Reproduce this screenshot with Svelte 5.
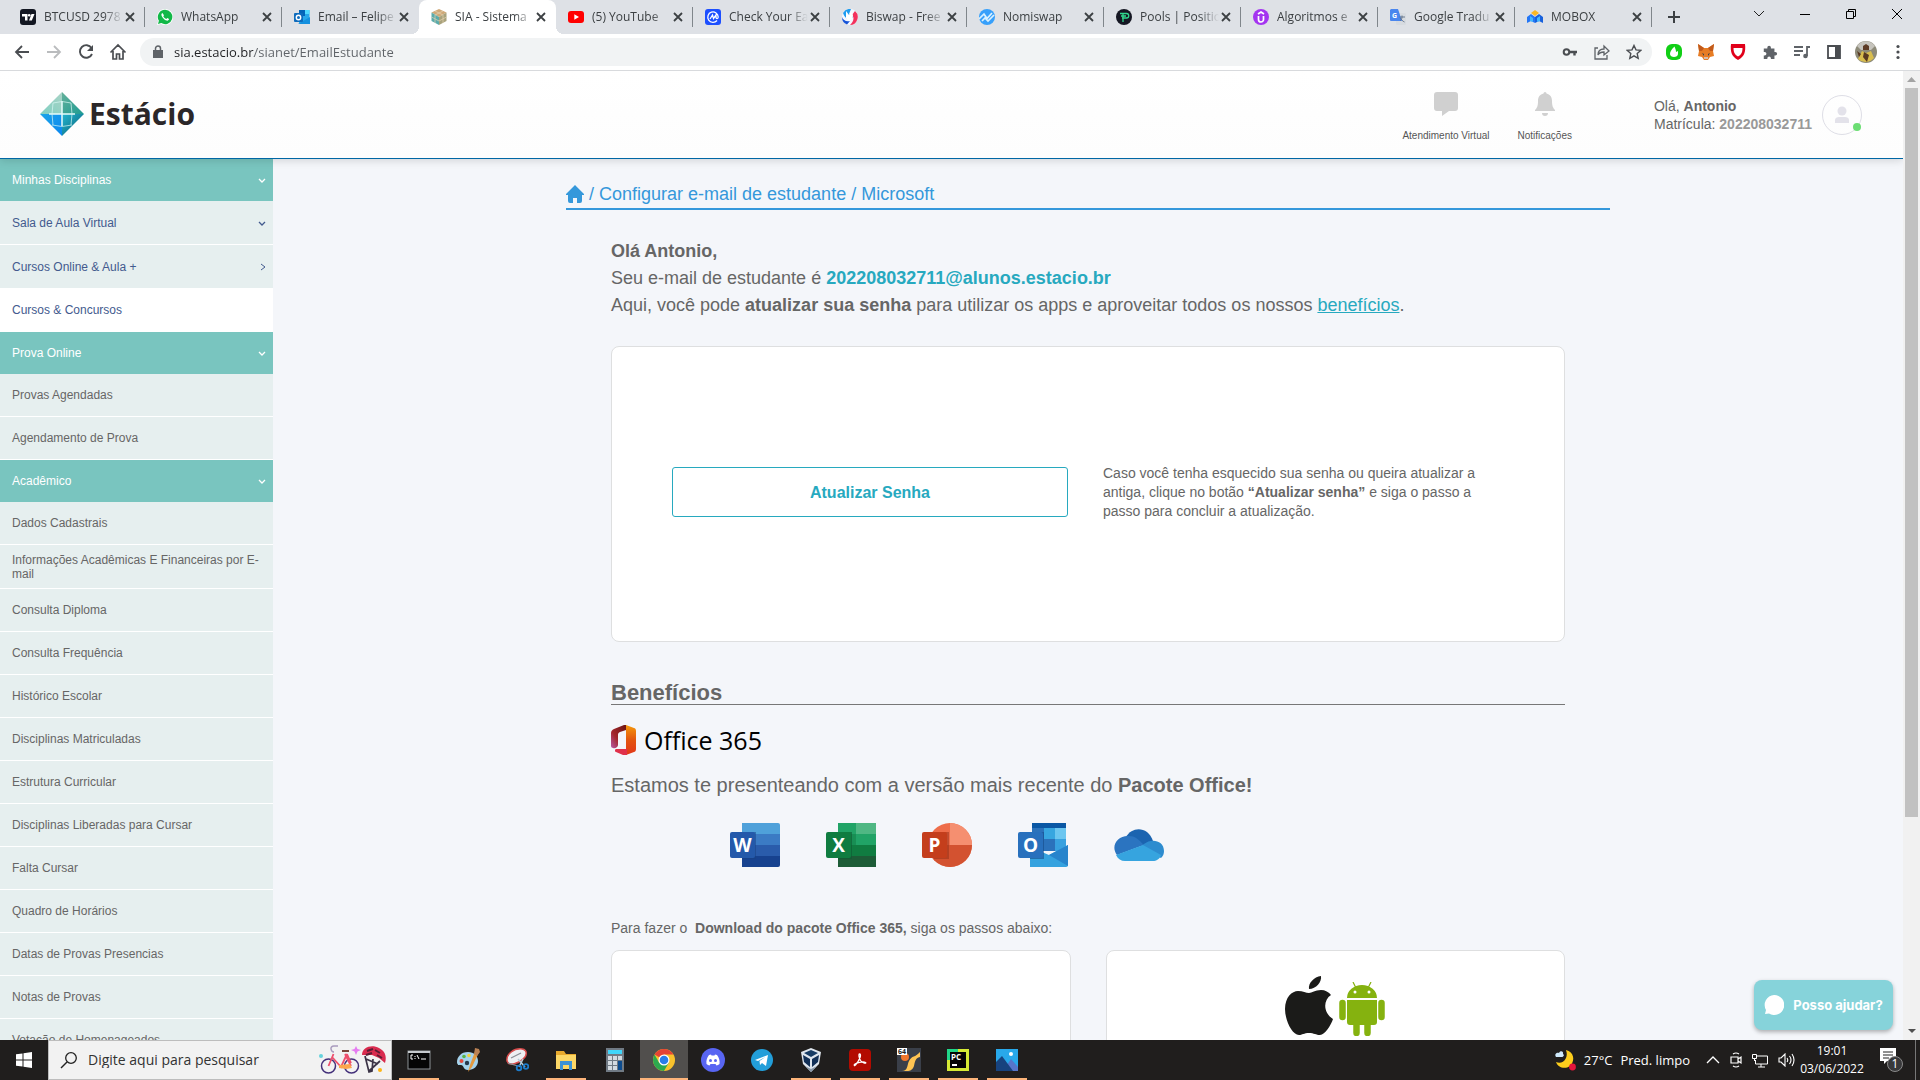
<script>
  const tabs = [
    { title: 'BTCUSD 2978', icon: 'tv' },
    { title: 'WhatsApp', icon: 'whats' },
    { title: 'Email – Felipe', icon: 'outlook' },
    { title: 'SIA - Sistema', icon: 'sia', active: true },
    { title: '(5) YouTube', icon: 'yt' },
    { title: 'Check Your Ea', icon: 'cmc' },
    { title: 'Biswap - Free', icon: 'biswap' },
    { title: 'Nomiswap', icon: 'nomi' },
    { title: 'Pools | Positio', icon: 'pools' },
    { title: 'Algoritmos e', icon: 'udemy' },
    { title: 'Google Tradu', icon: 'translate' },
    { title: 'MOBOX', icon: 'mobox' }
  ];

  const menu = [
    { label: 'Minhas Disciplinas', kind: 'head', arrow: 'down' },
    { label: 'Sala de Aula Virtual', kind: 'link tall', arrow: 'down' },
    { label: 'Cursos Online & Aula +', kind: 'link tall', arrow: 'right' },
    { label: 'Cursos & Concursos', kind: 'link white' },
    { label: 'Prova Online', kind: 'head', arrow: 'down' },
    { label: 'Provas Agendadas', kind: 'item' },
    { label: 'Agendamento de Prova', kind: 'item' },
    { label: 'Acadêmico', kind: 'head', arrow: 'down' },
    { label: 'Dados Cadastrais', kind: 'item' },
    { label: 'Informações Acadêmicas E Financeiras por E-mail', kind: 'item tall' },
    { label: 'Consulta Diploma', kind: 'item' },
    { label: 'Consulta Frequência', kind: 'item' },
    { label: 'Histórico Escolar', kind: 'item' },
    { label: 'Disciplinas Matriculadas', kind: 'item' },
    { label: 'Estrutura Curricular', kind: 'item' },
    { label: 'Disciplinas Liberadas para Cursar', kind: 'item' },
    { label: 'Falta Cursar', kind: 'item' },
    { label: 'Quadro de Horários', kind: 'item' },
    { label: 'Datas de Provas Presencias', kind: 'item' },
    { label: 'Notas de Provas', kind: 'item' },
    { label: 'Votação de Homenageados', kind: 'item' }
  ];

  const apps = [
    { name: 'Prompt de Comando', icon: 'cmd', open: true },
    { name: 'Paint', icon: 'paint' },
    { name: 'Ferramenta de Captura', icon: 'snip' },
    { name: 'Explorador de Arquivos', icon: 'folder', open: true },
    { name: 'Calculadora', icon: 'calc' },
    { name: 'Google Chrome', icon: 'chrome', open: true, active: true },
    { name: 'Discord', icon: 'discord' },
    { name: 'Telegram', icon: 'telegram' },
    { name: 'VirtualBox', icon: 'vbox', open: true },
    { name: 'Acrobat', icon: 'acrobat', open: true },
    { name: 'Cheats 64', icon: 'sixty', open: true },
    { name: 'PyCharm', icon: 'pycharm', open: true },
    { name: 'Fotos', icon: 'photos', open: true }
  ];
  let url = $state('sia.estacio.br/sianet/EmailEstudante');
</script>

{#snippet fav(name)}
  <svg class="fav" viewBox="0 0 16 16" aria-hidden="true">
    {#if name === 'tv'}
      <rect width="16" height="16" rx="3" fill="#131722" />
      <path d="M2 5h5.500v6.500H5V7.500H2zM11.500 5H14.500l-2.700 6.500H9z" fill="#fff" /><circle cx="9.200" cy="6.300" r="1.300" fill="#fff" />
    {:else if name === 'whats'}
      <path d="M8 0a8 8 0 0 0-6.900 12L0 16l4.100-1.100A8 8 0 1 0 8 0z" fill="#fff" />
      <path d="M8 .8a7.200 7.200 0 0 0-6.100 11l-.9 3.200 3.300-.9A7.200 7.200 0 1 0 8 .8z" fill="#12b848" />
      <path d="M5.400 4c-1 .5-1.300 1.700-.7 3 1 2.200 2.700 3.900 4.800 4.600 1.400.4 2.500-.5 2.600-1.500L10.300 9l-1 1C8 9.500 7 8.500 6.300 7.200L7 6.200z" fill="#fff" />
    {:else if name === 'outlook'}
      <path d="M5 1h10.500v13H5z" fill="#28a8ea" /><path d="M5 1h10.500v4H5z" fill="#50d9ff" /><path d="M5 1h6v6H5z" fill="#0364b8" />
      <path d="M4 15l12-7v7z" fill="#1490df" /><rect y="4" width="9" height="9" rx="1" fill="#0f6cbd" />
      <circle cx="4.500" cy="8.500" r="2.200" fill="none" stroke="#fff" stroke-width="1.400" />
    {:else if name === 'sia'}
      <path d="M8 0l7.500 3.500L8 8 .5 3.500z" fill="#cfa978" /><path d="M.5 3.500L8 8v8L.5 12z" fill="#5babab" /><path d="M15.500 3.500L8 8v8l7.500-4z" fill="#a8a27c" />
      <path d="M4 2l8 4v8M12 2L4 6v8M.5 8L8 12l7.500-4" stroke="#e6d3b0" fill="none" stroke-width=".7" />
    {:else if name === 'yt'}
      <rect y="2" width="16" height="12" rx="3" fill="#f00" /><path d="M6.300 5.300L11 8l-4.700 2.700z" fill="#fff" />
    {:else if name === 'cmc'}
      <rect width="16" height="16" rx="3" fill="#1d4fff" />
      <path d="M12 11.500A5.200 5.200 0 1 1 13.200 8c0 2-2.200 2-2.200.3V6L8.500 9.500 7.500 6 5 10" fill="none" stroke="#fff" stroke-width="1.300" />
    {:else if name === 'biswap'}
      <circle cx="8" cy="8" r="8" fill="#f4f8ff" /><path d="M1 4a8 8 0 0 1 8-4L7 5l4 3-3 2C4 10 2 7 1 4z" fill="#1e9cf0" /><path d="M0 8c1 3 4 5 8 4l-3 3.500A8 8 0 0 1 0 8z" fill="#1553d8" />
      <path d="M13 2a8 8 0 0 1-5 14c3-3 5-7 2-10z" fill="#f3325c" /><path d="M4 2l3 4 2-3 2 3-1 4-3 2-3-3z" fill="#fff" />
    {:else if name === 'nomi'}
      <circle cx="8" cy="8" r="8" fill="#37a0fb" /><path d="M0 10l5-5 3 4.500L13 4M3 12l3-3 3 3 6-6" fill="none" stroke="#d9f1ff" stroke-width="1.700" />
    {:else if name === 'pools'}
      <circle cx="8" cy="8" r="8" fill="#151723" /><path d="M4 4.500h6.500a2 2 0 0 1 0 4.500H6M7 4.500V13M5 7h5" fill="none" stroke="#31d68d" stroke-width="1.300" />
    {:else if name === 'udemy'}
      <circle cx="8" cy="8" r="8" fill="#a435f0" /><path d="M5 5l3-2 3 2M5.500 7v3.500a2.500 2.500 0 0 0 5 0V7" fill="none" stroke="#fff" stroke-width="1.700" />
    {:else if name === 'translate'}
      <rect x="6" y="4" width="10" height="12" rx="1" fill="#d7dbe0" /><path d="M1 0h7l4 12H1a1 1 0 0 1-1-1V1z" fill="#4a86ee" />
      <text x="2" y="8.500" font-size="7" font-weight="700" fill="#fff">G</text><path d="M9.500 8H15M12 6.500V8c0 2-1 3-2 4M10.500 9c1 2 2 3 4 4" stroke="#5f6f86" fill="none" stroke-width=".9" />
    {:else}
      <path d="M0 8l4-3 4 3v6l-4-2-4 2z" fill="#2476f5" /><path d="M16 8l-4-3-4 3v6l4-2 4 2z" fill="#1861dc" /><path d="M4 4l4-3 4 3-4 3z" fill="#fbb824" /><path d="M3 7l3 2v4l-3-1zM13 7l-3 2v4l3-1z" fill="#43b6ff" />
    {/if}
  </svg>
{/snippet}

{#snippet app(name)}
  <svg class="app-icon" viewBox="0 0 24 24" aria-hidden="true">
    {#if name === 'cmd'}
      <rect x="1" y="3" width="22" height="18" fill="#050505" stroke="#8c9196" /><path d="M1 3h22v2H1z" fill="#c5c9cd" />
      <path d="M6 7H4v4h2M8 8v1M8 10v1M10 7l2 4M14 11h5" fill="none" stroke="#fff" />
    {:else if name === 'paint'}
      <path d="M12 4C5 4 1 9 1 14c0 3 2 3 4 3 3 0 2 5 7 5 6 0 10-4 10-9s-4-9-10-9z" fill="#a5d3ec" /><circle cx="5.500" cy="13" r="2" fill="#e64b3c" /><circle cx="8" cy="8.500" r="1.800" fill="#57b545" /><circle cx="13" cy="7.500" r="1.800" fill="#f2d13c" />
      <circle cx="11" cy="15" r="2.200" fill="#24384a" /><path d="M20 1l3 3-7 15-4 5 2-7z" fill="#e49a3f" /><path d="M19 0l4 1 1 3-3 4-3-2z" fill="#b98154" />
    {:else if name === 'snip'}
      <path d="M2 13C1 6 9 0 17 1c6 1 5 7 1 10-4 4-14 8-16 2z" fill="#eef0f3" stroke="#d94d4d" stroke-width="1.500" /><path d="M6 10l10-5M3 15l10 3" stroke="#8c9097" stroke-width="1.300" />
      <path d="M13 11l7 8M18 11l-4 8" stroke="#b5cbd9" stroke-width="1.500" /><circle cx="14" cy="20" r="2.300" fill="none" stroke="#1d7ccb" stroke-width="1.800" /><circle cx="21" cy="18.500" r="2.300" fill="none" stroke="#1d7ccb" stroke-width="1.800" />
    {:else if name === 'folder'}
      <path d="M2 3h8l2 3h10v15H2z" fill="#e8a92d" /><path d="M2 7h20v14H2z" fill="#fcd766" /><path d="M6 13h12v9h-3v-5H9v5H6z" fill="#3b92d6" />
    {:else if name === 'calc'}
      <path d="M3 0h18v24H3z" fill="#707a84" /><path d="M5 2h14v4H5z" fill="#40d6fa" /><path d="M5 8h4v4H5zM10 8h4v4h-4zM15 8h4v4h-4zM5 13h4v4H5zM10 13h4v4h-4zM5 18h4v4H5zM10 18h4v4h-4z" fill="#d4dbe1" /><path d="M15 13h4v9h-4z" fill="#0d4c8e" />
    {:else if name === 'chrome'}
      <circle cx="12" cy="12" r="11" fill="#f8c12c" /><path d="M12 12L2.500 6.500A11 11 0 0 1 21.500 6.500H12z" fill="#e54335" /><path d="M2.500 6.500A11 11 0 0 0 12 23l4.800-8.300L12 12 7.200 14.700z" fill="#2da94f" />
      <circle cx="12" cy="12" r="5.500" fill="#fff" /><circle cx="12" cy="12" r="4.300" fill="#2a7de9" />
    {:else if name === 'discord'}
      <circle cx="12" cy="12" r="12" fill="#5865f2" /><path d="M8 7l2-.5.500 1h3l.5-1 2 .5c2 2.500 3 5.500 2.500 9-1 .8-2 1.200-3 1.500l-1-1.500h-5l-1 1.500c-1-.3-2-.7-3-1.500C5 12.500 6 9.500 8 7z" fill="#fff" /><circle cx="9.500" cy="12.500" r="1.500" fill="#5865f2" /><circle cx="14.500" cy="12.500" r="1.500" fill="#5865f2" />
    {:else if name === 'telegram'}
      <circle cx="12" cy="12" r="11" fill="#229ed9" /><path d="M5 12l13-5-2 11-4-3-2 2-.500-4 6-4-7.500 4z" fill="#fff" />
    {:else if name === 'vbox'}
      <path d="M12 0l10 4-2 12-8 8-8-8L2 4z" fill="#dfe6ee" /><path d="M12 2l7 3-7 4-7-4z" fill="#163b64" /><path d="M4 7l7 4v8l-6-5zM20 7l-7 4v8l6-5z" fill="#123057" /><path d="M6 18l6 6 6-6-6 3z" fill="#8696a7" />
    {:else if name === 'acrobat'}
      <rect x="1" y="1" width="22" height="22" rx="4" fill="#b30b00" /><path d="M11.500 6c2 0 1 5-4 11-1 1.500-2 0-.500-1 3-2 9-2.500 10.500-1.500s-3 1-5-2c-1.500-2.500-2-6.500-1-6.500z" fill="none" stroke="#fff" stroke-width="1.300" />
    {:else if name === 'sixty'}
      <path d="M0 0h24v24H0z" fill="#3a3f49" /><path d="M5 23c6 0 5-6 7-10 3-6 6-3 11-9v5c-5 1-5 5-6 9-2 5-5 5-8 5z" fill="#ffc453" /><circle cx="8" cy="9" r="4" fill="#f0762b" /><path d="M0 0h10v7H0z" fill="#fff" /><text x="1" y="6" font-size="7" font-weight="700" fill="#222">64</text>
    {:else if name === 'pycharm'}
      <path d="M1 1h22v22H1z" fill="#d6ea35" /><path d="M1 1h11v11H1z" fill="#21d789" /><path d="M4 4h16v16H4z" fill="#050505" /><text x="5" y="12" font-size="8" font-weight="700" fill="#fff">PC</text><path d="M6 16h5v2H6z" fill="#fff" />
    {:else}
      <path d="M1 1h22v22H1z" fill="#28a8ea" /><path d="M8 23l8-12 7 8v4z" fill="#5775c9" /><path d="M1 14l6-6 11 15H1z" fill="#17437e" /><circle cx="16" cy="6" r="2" fill="#fff" />
    {/if}
  </svg>
{/snippet}

<div class="screen">
  <header class="chrome">
    <div class="strip">
      {#each tabs as t}
        <div class="tab" class:active={t.active}>
          {@render fav(t.icon)}
          <button class="title">{t.title}</button>
          <button class="x" aria-label="Fechar guia"><svg width="10" height="10" viewBox="0 0 10 10"><path d="M1 1l8 8M9 1L1 9" stroke="#3c4043" stroke-width="1.800" /></svg></button>
        </div>
      {/each}
      <button class="plus" aria-label="Nova guia"><svg width="14" height="14" viewBox="0 0 14 14"><path d="M7 1v12M1 7h12" stroke="#3c4043" stroke-width="2" /></svg></button>
      <div class="window-controls">
        <button aria-label="Pesquisar guias"><svg width="12" height="12" viewBox="0 0 12 12"><path d="M1 3l5 5 5-5" stroke="#222" fill="none" /></svg></button>
        <button aria-label="Minimizar"><svg width="12" height="12" viewBox="0 0 12 12"><path d="M1 6.500h10" stroke="#000" /></svg></button>
        <button aria-label="Restaurar"><svg width="12" height="12" viewBox="0 0 12 12"><path d="M1.500 3.500h7v7h-7zM3.500 3.500v-2h7v7h-2" stroke="#000" fill="none" /></svg></button>
        <button aria-label="Fechar"><svg width="12" height="12" viewBox="0 0 12 12"><path d="M1 1l10 10M11 1L1 11" stroke="#000" /></svg></button>
      </div>
    </div>
    <div class="toolbar">
      <div class="group">
        <button aria-label="Voltar"><svg width="18" height="18" viewBox="0 0 18 18"><path d="M16 9H3M9 3L3 9l6 6" stroke="#4a4d51" stroke-width="1.800" fill="none" /></svg></button>
        <button aria-label="Avançar"><svg width="18" height="18" viewBox="0 0 18 18"><path d="M2 9h13M9 3l6 6-6 6" stroke="#babcbe" stroke-width="1.800" fill="none" /></svg></button>
        <button aria-label="Recarregar"><svg width="18" height="18" viewBox="0 0 18 18"><path d="M14.500 5A6.300 6.300 0 1 0 15 11" stroke="#4a4d51" stroke-width="1.900" fill="none" /><path d="M16 2v6h-6z" fill="#4a4d51" /></svg></button>
        <button aria-label="Página inicial"><svg width="18" height="18" viewBox="0 0 18 18"><path d="M1.500 9.500L9 2l7.500 7.500M4 8v8h3.500v-5h3v5H14V8" stroke="#4a4d51" stroke-width="1.700" fill="none" /></svg></button>
      </div>
      <div class="omnibox">
        <svg width="12" height="14" viewBox="0 0 12 14" aria-hidden="true"><path d="M1 5h10v8H1z" fill="#5f6368" /><path d="M3.500 5.500V3.500a2.500 2.500 0 0 1 5 0v2" stroke="#5f6368" stroke-width="1.500" fill="none" /></svg>
        <input aria-label="Endereço" bind:value={url} />
        <button aria-label="Senhas"><svg width="16" height="16" viewBox="0 0 16 16"><circle cx="4.500" cy="8" r="2.800" stroke="#4a4d51" stroke-width="2" fill="none" /><path d="M7 8h8M12.500 8v3.500" stroke="#4a4d51" stroke-width="2.400" /></svg></button>
        <button aria-label="Compartilhar"><svg width="18" height="18" viewBox="0 0 18 18"><path d="M5 5H2v11h12v-4" stroke="#5f6368" fill="none" stroke-width="1.300" /><path d="M5 12c0-4 2-6 6-6V3l5 5-5 4V9c-3 0-5 1-6 3z" stroke="#5f6368" fill="none" stroke-width="1.300" /></svg></button>
        <button aria-label="Favoritar"><svg width="16" height="16" viewBox="0 0 16 16"><path d="M8 1.500l2 4.400 4.700.5-3.500 3.200 1 4.700L8 11.900l-4.200 2.400 1-4.700L1.300 6.400 6 5.900z" stroke="#4a4d51" fill="none" stroke-width="1.400" /></svg></button>
      </div>
      <div class="group">
        <button aria-label="Extensão verde"><svg width="16" height="16" viewBox="0 0 16 16"><rect width="16" height="16" rx="6" fill="#11cf16" /><path d="M8.500 2.500c-3 3-4.500 5-4.500 7.500 0 4 8 4 8 0V7l-2 1c0-2-.500-3-1.500-5.500z" fill="#fff" /></svg></button>
        <button aria-label="MetaMask"><svg width="18" height="16" viewBox="0 0 18 16"><path d="M1 0l6 4h4l6-4-1 7 1 5-4 1-2 3H7l-2-3-4-1 1-5z" fill="#e77c24" /><path d="M1 0l6 4-2 3-3 0zM17 0l-6 4 2 3 3 0z" fill="#c15a1b" /><path d="M5 9l2 1v2zM13 9l-2 1v2z" fill="#2c3c4c" /><path d="M7 13h4v2H7z" fill="#d5bfb2" /></svg></button>
        <button aria-label="Proteção"><svg width="18" height="16" viewBox="0 0 18 16"><path d="M2 0h14c1 8-1 13-7 16C3 13 1 8 2 0z" fill="#e1001a" /><path d="M4.500 4h9c0 4-1 6.500-4.500 8.500C5.500 10.500 4.500 8 4.500 4z" fill="#fff" /></svg></button>
        <button aria-label="Extensões"><svg width="16" height="16" viewBox="0 0 18 18"><path d="M2 5h4V4a2 2 0 0 1 4 0v1h4v4h1a2 2 0 0 1 0 4h-1v4h-4v-1a2 2 0 0 0-4 0v1H2v-4h1a2 2 0 0 0 0-4H2z" fill="#5f6368" /></svg></button>
        <button aria-label="Mídia"><svg width="18" height="16" viewBox="0 0 18 16"><path d="M1 3h9M1 7h9M1 11h6M17 3h-3v9" stroke="#5f6368" stroke-width="1.800" fill="none" /><circle cx="12.500" cy="12" r="2.300" fill="#5f6368" /></svg></button>
        <button aria-label="Painel lateral"><svg width="14" height="14" viewBox="0 0 14 14"><path d="M1 1h12v12H1z" stroke="#4a4d51" stroke-width="1.800" fill="none" /><path d="M8 1h5v12H8z" fill="#4a4d51" /></svg></button>
        <button aria-label="Perfil"><svg width="22" height="22" viewBox="0 0 22 22"><circle cx="11" cy="11" r="11" fill="#8d8a78" /><path d="M2 5a11 11 0 0 1 18 0l-4 4H6z" fill="#c6c4bd" /><path d="M8 5l3-2 3 2v4H8z" fill="#5d3b25" /><path d="M3 18l4-8 4 2 5-2 3 7a11 11 0 0 1-16 1z" fill="#d8bd4e" /><path d="M9 11l5 3-2 7-4-5zM2 10l4 3-2 3z" fill="#593921" /></svg></button>
        <button aria-label="Menu"><svg width="4" height="16" viewBox="0 0 4 16"><circle cx="2" cy="2.500" r="1.600" fill="#4a4d51" /><circle cx="2" cy="8" r="1.600" fill="#4a4d51" /><circle cx="2" cy="13.500" r="1.600" fill="#4a4d51" /></svg></button>
      </div>
    </div>
  </header>

  <div class="viewport">
    <div class="page">
      <header class="site-head">
        <a class="brand" href="#inicio">
          <svg width="44" height="44" viewBox="0 0 44 44" aria-hidden="true">
            <defs>
              <linearGradient id="lg-blue" x1="0" y1="0" x2="1" y2="1"><stop offset="0" stop-color="#1ba5e8" /><stop offset="1" stop-color="#0a86f0" /></linearGradient>
              <linearGradient id="lg-mint" x1="0" y1="1" x2="1" y2="0"><stop offset="0" stop-color="#7fd0c2" /><stop offset="1" stop-color="#a9d3c6" /></linearGradient>
              <linearGradient id="lg-sea" x1="0" y1="0" x2="1" y2="1"><stop offset="0" stop-color="#64b09a" /><stop offset="1" stop-color="#1e9c93" /></linearGradient>
              <linearGradient id="lg-deep" x1="0" y1="0" x2="1" y2="1"><stop offset="0" stop-color="#23b5d0" /><stop offset="1" stop-color="#0a5c70" /></linearGradient>
            </defs>
            <path d="M22 0L0 22h22z" fill="url(#lg-mint)" /><path d="M22 0v22h22z" fill="url(#lg-sea)" /><path d="M0 22l22 22V22z" fill="url(#lg-blue)" /><path d="M44 22L22 44V22z" fill="url(#lg-deep)" />
            <path d="M22 9v25M9 22h26" stroke="#e6fbfa" stroke-width="1.500" /><path d="M13 11q9-3 18 0M12 33q10 3 20 0M13 11q-2 11 0 22M31 11q2 11 0 22" stroke="#d8f6f4" stroke-width="1" opacity=".7" fill="none" />
          </svg>
          <span>Estácio</span>
        </a>
        <nav class="tools" aria-label="Atalhos">
          <a href="#atendimento"><svg width="24" height="24" viewBox="0 0 24 24" aria-hidden="true"><path d="M3 0h18a3 3 0 0 1 3 3v13a3 3 0 0 1-3 3h-6l-7 5v-5H3a3 3 0 0 1-3-3V3a3 3 0 0 1 3-3z" fill="#d0d0d0" /></svg>Atendimento Virtual</a>
          <a href="#notificacoes"><svg width="24" height="24" viewBox="0 0 24 24" aria-hidden="true"><path d="M12 0a1.500 1.500 0 0 1 1.500 1.500C17 2.300 19 5 19 9c0 5 1 7 3 9v1H2v-1c2-2 3-4 3-9 0-4 2-6.700 5.500-7.500A1.500 1.500 0 0 1 12 0zM9 21h6a3 3 0 0 1-6 0z" fill="#d0d0d0" /></svg>Notificações</a>
        </nav>
        <div class="user">
          <div>Olá, <b>Antonio</b><br />Matrícula: <b class="dim">202208032711</b></div>
          <button class="avatar" aria-label="Perfil do aluno"><svg width="16" height="18" viewBox="0 0 16 18"><circle cx="8" cy="5" r="4.500" fill="#e3e2ea" /><path d="M1 17v-3c0-2 2-3 4-3h6c2 0 4 1 4 3v3z" fill="#e3e2ea" /></svg><i></i></button>
        </div>
      </header>
      <div class="body">
        <nav class="side" aria-label="Menu principal">
          {#each menu as m}
            <a class={m.kind} href="#menu">
              <span>{m.label}</span>
              {#if m.arrow === 'down'}<svg width="8" height="8" viewBox="0 0 8 8" aria-hidden="true"><path d="M1 3l3 3 3-3" fill="none" stroke="currentColor" stroke-width="1.300" /></svg>{/if}
              {#if m.arrow === 'right'}<svg width="8" height="8" viewBox="0 0 8 8" aria-hidden="true"><path d="M3 1l4 3-4 3" fill="none" stroke="currentColor" /></svg>{/if}
            </a>
          {/each}
        </nav>
        <main>
          <div class="wrap">
            <div class="crumb">
              <svg width="18" height="18" viewBox="0 0 18 18" aria-hidden="true"><path d="M9 0l9 9v1h-2v6a2 2 0 0 1-2 2h-3v-5H7v5H4a2 2 0 0 1-2-2v-6H0V9z" fill="#3598db" /></svg>
              <span>/ Configurar e-mail de estudante / Microsoft</span>
            </div>
            <section class="content">
              <p class="intro"><b>Olá Antonio,</b><br />Seu e-mail de estudante é <b class="teal">202208032711@alunos.estacio.br</b><br />Aqui, você pode <b>atualizar sua senha</b> para utilizar os apps e aproveitar todos os nossos <a href="#beneficios">benefícios</a>.</p>
              <div class="card reset">
                <button>Atualizar Senha</button>
                <p>Caso você tenha esquecido sua senha ou queira atualizar a antiga, clique no botão <b>“Atualizar senha”</b> e siga o passo a passo para concluir a atualização.</p>
              </div>
              <h2 id="beneficios">Benefícios</h2>
              <div class="office">
                <svg width="25" height="30" viewBox="0 0 25 30" aria-hidden="true">
                  <defs>
                    <linearGradient id="of-a" x1="0" y1="1" x2="1" y2="0"><stop offset="0" stop-color="#b75aa8" /><stop offset=".4" stop-color="#a3262c" /><stop offset="1" stop-color="#6b1512" /></linearGradient>
                    <linearGradient id="of-b" x1="0" y1="0" x2="0" y2="1"><stop offset="0" stop-color="#f59a0b" /><stop offset=".5" stop-color="#e3550f" /><stop offset="1" stop-color="#e2361a" /></linearGradient>
                  </defs>
                  <path d="M15 0v5L9 7c-2 1-2 2-2 3v10c0 2-3 4-5 3-1 0-2-1-2-2V8c0-2 1-3 3-4L13 0z" fill="url(#of-a)" /><path d="M15 0l8 3c1 0 2 1 2 3v18c0 2-1 3-2 3l-8 3z" fill="url(#of-b)" /><path d="M4 25c0-1 1-1 2-1h10v6h-4l-7-3c-1 0-1-1-1-2z" fill="#e0304a" />
                </svg>
                <span>Office 365</span>
              </div>
              <p class="gift">Estamos te presenteando com a versão mais recente do <b>Pacote Office!</b></p>
              <div class="suite">
                <svg viewBox="0 0 50 44" role="img" aria-label="Word"><path d="M12 0h36a2 2 0 0 1 2 2v9H12z" fill="#4fa1da" /><path d="M12 11h38v11H12z" fill="#3b7bc4" /><path d="M12 22h38v11H12z" fill="#2a5cab" /><path d="M12 33h38v9a2 2 0 0 1-2 2H12z" fill="#17428f" /><path d="M12 9h14v27H12z" fill="#173f82" opacity=".5" /><rect y="9" width="25" height="26" rx="2" fill="#2459aa" /><text x="12.500" y="29" text-anchor="middle">W</text></svg>
                <svg viewBox="0 0 50 44" role="img" aria-label="Excel"><path d="M12 0h38v44H12z" fill="#21a366" /><path d="M30 0h20v11H30z" fill="#4fb783" /><path d="M12 11h18v11H12z" fill="#107c41" opacity=".5" /><path d="M12 22h38v11H12z" fill="#107c41" /><path d="M12 33h38v11H12z" fill="#1d5c37" /><path d="M12 9h14v27H12z" fill="#0f5a32" opacity=".6" /><rect y="9" width="25" height="26" rx="2" fill="#0f7c40" /><text x="12.500" y="29" text-anchor="middle">X</text></svg>
                <svg viewBox="0 0 50 44" role="img" aria-label="PowerPoint"><circle cx="28" cy="22" r="22" fill="#ee6d4a" /><path d="M28 0a22 22 0 0 1 22 22H28z" fill="#f58f70" /><path d="M6 22h44a22 22 0 0 1-44 0z" fill="#d35230" /><path d="M12 9h15v27H12z" fill="#932d16" opacity=".5" /><rect y="9" width="25" height="26" rx="2" fill="#c43e1c" /><text x="12.500" y="29" text-anchor="middle">P</text></svg>
                <svg viewBox="0 0 50 44" role="img" aria-label="Outlook"><path d="M14 0h34v28H14z" fill="#2b72bb" /><path d="M14 0h34v5H14z" fill="#0a57a4" /><path d="M26 5h11v11H26z" fill="#37a6e0" /><path d="M37 5h11v11H37z" fill="#6cc6f0" /><path d="M37 16h11v12H37z" fill="#38a1df" /><path d="M12 24l19 8 19-10v20a2 2 0 0 1-2 2H12z" fill="#35a2df" /><path d="M31 32l19-10v21z" fill="#2784cc" /><path d="M12 9h14v27H12z" fill="#154b87" opacity=".6" /><rect y="9" width="25" height="26" rx="2" fill="#2870bd" /><text x="12.500" y="29" text-anchor="middle">O</text></svg>
                <svg viewBox="0 0 50 44" role="img" aria-label="OneDrive"><path d="M12 14C18 3 34 3 39 18L30 23z" fill="#1b64b0" /><path d="M15 13c6 0 9 3 15 9L3 32C-4 23 4 12 15 13z" fill="#2b74c0" /><path d="M30 21c7-6 20-4 20 7 0 3-1 5-3 7L26 24z" fill="#2d8ccf" /><path d="M29 22l18 10c-1 4-5 6-8 6H11c-4 0-7-2-9-6z" fill="#36a4df" /></svg>
              </div>
              <p class="steps">Para fazer o &nbsp;<b>Download do pacote Office 365,</b> siga os passos abaixo:</p>
              <div class="downloads">
                <div class="card"></div>
                <div class="card">
                  <svg width="48" height="60" viewBox="0 0 48 60" role="img" aria-label="Apple"><path d="M36 0c1 6-5 13-12 13C23 7 29 1 36 0z" fill="#1b1b19" /><path d="M24 17c3 0 6-3 12-3 4 0 8 2 10 5-8 5-8 18 2 24-2 6-8 16-13 16-4 0-6-2-11-2s-7 2-10 2C7 59 0 44 0 33 0 21 7 15 13 15c5 0 8 2 11 2z" fill="#1b1b19" /></svg>
                  <svg width="46" height="54" viewBox="0 0 46 54" role="img" aria-label="Android"><path d="M8 16a15 13 0 0 1 30 0zM8 18h30v22a3 3 0 0 1-3 3H11a3 3 0 0 1-3-3z" fill="#85b20f" /><path d="M14 0l3 6M32 0l-3 6" stroke="#85b20f" stroke-width="1.200" /><path d="M3.500 21v14M42.500 21v14" stroke="#85b20f" stroke-width="6.500" stroke-linecap="round" /><path d="M17.500 42v9M28.500 42v9" stroke="#85b20f" stroke-width="6.500" stroke-linecap="round" /><circle cx="16" cy="10" r="1.500" fill="#fff" /><circle cx="30" cy="10" r="1.500" fill="#fff" /></svg>
                </div>
              </div>
            </section>
          </div>
        </main>
      </div>
      <button class="help"><svg width="20" height="20" viewBox="0 0 20 20" aria-hidden="true"><path d="M10 0a10 10 0 1 1-5 18.500L1 19l1-4A10 10 0 0 1 10 0z" fill="#fff" /></svg>Posso ajudar?</button>
    </div>
    <div class="scroll" aria-hidden="true">
      <svg width="17" height="17" viewBox="0 0 17 17"><path d="M4 11h9l-4.500-5z" fill="#a3a3a3" /></svg>
      <div class="track"><div class="thumb"></div></div>
      <svg width="17" height="17" viewBox="0 0 17 17"><path d="M5 6h8l-4 4z" fill="#505050" /></svg>
    </div>
  </div>

  <footer class="taskbar">
    <button class="start" aria-label="Iniciar"><svg width="16" height="16" viewBox="0 0 16 16"><path d="M0 2.300l6.500-.9v6.100H0zM7.500 1.200L16 0v7.500H7.500zM0 8.500h6.500v6.100L0 13.700zM7.500 8.500H16V16l-8.500-1.200z" fill="#fff" /></svg></button>
    <label class="find">
      <svg width="18" height="18" viewBox="0 0 18 18" aria-hidden="true"><circle cx="11" cy="7" r="5.300" stroke="#222" stroke-width="1.300" fill="none" /><path d="M7 11l-6 6" stroke="#222" stroke-width="1.400" /></svg>
      <input placeholder="Digite aqui para pesquisar" aria-label="Pesquisar" />
      <svg width="68" height="30" viewBox="0 0 68 30" aria-hidden="true">
        <circle cx="2" cy="11" r="2" fill="#66d3dc" /><circle cx="9.500" cy="21" r="7" fill="none" stroke="#43307a" stroke-width="1.500" /><circle cx="32.500" cy="21" r="7" fill="none" stroke="#43307a" stroke-width="1.500" />
        <path d="M9.500 21l5-12M13 12l9 10 6-13M26 9l6 12M28 9l4 9" fill="none" stroke="#ee4f6c" stroke-width="1.800" /><path d="M19 1h-4c-5 0-3 6 0 6" fill="none" stroke="#a99bbd" stroke-width="1.500" /><path d="M23 5h7v2h-7z" fill="#7a4438" /><path d="M20 20l11-1 2 4-6 1-7-1z" fill="#fda64b" />
        <path d="M37 1l1.500 3L42 5l-3.500 1.500L37 10l-1.500-3.500L32 5l3.500-1z" fill="#e57cf1" />
        <path d="M43 10C43 2 53-1 60 3c6 3 8 8 6 15l-6-5-7-3z" fill="#d92b4e" /><path d="M48 6l6-2M56 5l5 3M47 10l6-2M58 10l5 3" stroke="#5b1d35" stroke-width="2" /><path d="M46 11l4 16 3-1 1-12M50 26l11-10M47 14l12 5" fill="none" stroke="#3a3346" stroke-width="1.700" /><circle cx="61" cy="25" r="2" fill="#fdb515" />
      </svg>
    </label>
    <div class="apps">
      {#each apps as a}
        <button class:open={a.open} class:active={a.active} aria-label={a.name}>{@render app(a.icon)}</button>
      {/each}
    </div>
    <div class="tray">
      <button class="weather"><svg width="22" height="22" viewBox="0 0 22 22" aria-hidden="true"><path d="M12 1c8 2 9 10 5 15-5 5-13 3-15-3 7 3 13-4 10-12z" fill="#fdce1c" /><path d="M2 8c-2-3 1-5 3-4 1-3 5-2 4 1 2 1 0 3-1 3z" fill="#cfe9fb" /><circle cx="18.500" cy="18" r="3.400" fill="#e5153c" /></svg><span>27°C</span><span>Pred. limpo</span></button>
      <div class="status">
        <button aria-label="Ícones ocultos"><svg width="14" height="10" viewBox="0 0 14 10"><path d="M1 8l6-6 6 6" stroke="#fff" fill="none" stroke-width="1.300" /></svg></button>
        <button aria-label="Câmera"><svg width="12" height="16" viewBox="0 0 12 16"><path d="M1 5h7v6H1zM8 7l3-2v6L8 9M3 2q3-2 6 0M3 14q3 2 6 0" stroke="#fff" fill="none" stroke-width="1.200" /></svg></button>
        <button aria-label="Rede"><svg width="16" height="15" viewBox="0 0 16 15"><path d="M5 3h10.500v8H3.500V7M9 11v3M6 14h7M.5 1.500h4v4h-4zM2.500 5.500V8" stroke="#fff" fill="none" /></svg></button>
        <button aria-label="Volume"><svg width="18" height="14" viewBox="0 0 18 14"><path d="M1 5h2l4-4v12L3 9H1zM9 5q1.500 2 0 4M11.500 3q3 4 0 8M14 1q4 6 0 12" stroke="#fff" fill="none" stroke-width="1.100" /></svg></button>
      </div>
      <button class="clock">19:01<br />03/06/2022</button>
      <button class="notes" aria-label="1 notificação"><svg width="26" height="26" viewBox="0 0 26 26"><path d="M1 1h16v13H8l-3 3v-3H1z" fill="#fff" /><path d="M4 5h10M4 8h10M4 11h6" stroke="#222" /><circle cx="16" cy="17" r="7.500" fill="#38383a" stroke="#8a8a8a" /><text x="16" y="21" text-anchor="middle" font-size="12" fill="#fff">1</text></svg></button>
    </div>
  </footer>
</div>

<style>
  :global(body) { margin: 0; }
  .screen { height: 100vh; display: flex; flex-direction: column; overflow: hidden; font: 12px/16px "Open Sans", sans-serif; color: #3c4043; }
  button { font: inherit; color: inherit; border: 0; background: none; padding: 0; cursor: pointer; }
  a { color: inherit; text-decoration: none; }
  input { font: inherit; border: 0; background: none; outline: 0; padding: 0; min-width: 0; }
  p, h2 { margin: 0; }
  svg { display: block; flex: none; }

  .strip { height: 34px; display: flex; align-items: center; background: #dee1e6; padding-left: 8px; }
  .tab { position: relative; box-sizing: border-box; flex: 0 1 137px; min-width: 0; height: 20px; display: flex; align-items: center; padding: 0 7px 0 12px; border-right: 1px solid #80868b; }
  .tab:has(+ .active) { border-color: transparent; }
  .tab.active { height: 34px; background: #fff; border-color: transparent; border-radius: 8px 8px 0 0; }
  .tab.active::before, .tab.active::after { content: ""; position: absolute; bottom: 0; width: 8px; height: 8px; }
  .tab.active::before { left: -8px; background: radial-gradient(circle at 0 0, #dee1e6 8px, #fff 8px); }
  .tab.active::after { right: -9px; background: radial-gradient(circle at 100% 0, #dee1e6 8px, #fff 8px); }
  .fav { width: 16px; height: 16px; margin-right: 8px; }
  .title { flex: 1; min-width: 0; text-align: left; white-space: nowrap; overflow: hidden; mask-image: linear-gradient(90deg, #000 75%, transparent); }
  .x { width: 14px; height: 16px; display: grid; place-items: center; }
  .plus { width: 44px; height: 34px; display: grid; place-items: center; }
  .window-controls { margin-left: auto; display: flex; align-self: flex-start; }
  .window-controls button { width: 46px; height: 28px; display: grid; place-items: center; }

  .toolbar { height: 36px; display: flex; align-items: center; gap: 6px; padding: 0 6px; background: #fff; border-bottom: 1px solid #d8dadd; }
  .group { display: flex; }
  .toolbar button { width: 32px; height: 28px; display: grid; place-items: center; }
  .omnibox { flex: 1; height: 28px; display: flex; align-items: center; border-radius: 14px; background: #f1f3f4; padding: 0 2px 0 12px; }
  .omnibox input { flex: 1; margin-left: 10px; font-size: 13px; color: #5f6368; -webkit-text-fill-color: transparent; background: linear-gradient(90deg, #202124 80px, #5f6368 80px) text; }

  .viewport { flex: 1; min-height: 0; display: flex; font-family: "Liberation Sans", Arial, sans-serif; color: #666; }
  .page { position: relative; flex: 1; min-width: 0; display: flex; flex-direction: column; overflow: hidden; }
  .site-head { position: relative; z-index: 1; flex: none; box-sizing: border-box; height: 88px; display: flex; align-items: center; padding: 0 41px 0 40px; background: linear-gradient(#fff, #fdfdfd); border-bottom: 1px solid #0067a5; box-shadow: 0 2px 8px rgba(0, 0, 0, .13); }
  .brand { display: flex; align-items: center; gap: 5px; padding-bottom: 2px; font: 700 30px/40px "Open Sans", sans-serif; color: #2b2729; margin-right: auto; }
  .tools { display: flex; gap: 28px; margin-right: 82px; padding-top: 4px; font-size: 10px; line-height: 12px; color: #555; }
  .tools a { display: flex; flex-direction: column; align-items: center; gap: 14px; }
  .user { display: flex; align-items: center; gap: 10px; font-size: 14px; line-height: 18px; }
  .dim { color: #999; }
  .avatar { position: relative; box-sizing: border-box; width: 40px; height: 40px; border: 1px solid #dedee6; border-radius: 50%; display: grid; place-items: center; }
  .avatar i { position: absolute; right: 0; bottom: 3px; width: 8px; height: 8px; border-radius: 50%; background: #6cde74; }

  .body { flex: 1; min-height: 0; display: flex; background: #f4f6fa; }
  .side { flex: none; width: 273px; overflow: hidden; }
  .side a { box-sizing: border-box; height: 43px; display: flex; align-items: center; justify-content: space-between; padding: 0 7px 0 12px; font-size: 12px; line-height: 14px; background: #e6efef; border-bottom: 1px solid #fff; }
  .side a.tall { height: 44px; }
  .side a.head { height: 42px; background: #79c5bf; color: #fff; border: 0; }
  .side a.link { color: #435a8e; }
  .side a.white { background: #fff; }

  main { flex: 1; min-width: 0; overflow: hidden; padding: 23px 24px; font-size: 14px; line-height: 19px; }
  .wrap { max-width: 1044px; margin: 0 auto; }
  .crumb { display: flex; align-items: center; gap: 5px; padding-bottom: 2px; border-bottom: 2px solid #3598db; color: #3598db; font-size: 18px; line-height: 24px; }
  .content { padding: 28px 45px 0; }
  .intro { font-size: 18px; line-height: 27px; }
  .teal { color: #27a9bf; }
  .intro a { color: #27a9bf; text-decoration: underline; }
  .card { box-sizing: border-box; background: #fff; border: 1px solid #dedfe0; border-radius: 8px; }
  .reset { height: 296px; margin-top: 27px; padding: 0 60px 4px; display: grid; grid-template-columns: 396fr 401fr; gap: 35px; align-items: center; }
  .reset button { height: 50px; border: 1px solid #27a9bf; border-radius: 3px; color: #27a9bf; font-weight: 700; font-size: 16px; }
  h2 { margin-top: 40px; font-size: 22px; line-height: 22px; border-bottom: 1px solid #777; }
  .office { display: flex; align-items: center; gap: 8px; margin-top: 20px; height: 30px; font: 25px/30px "Open Sans", sans-serif; color: #000; }
  .gift { margin-top: 18px; font-size: 20px; line-height: 24px; }
  .suite { display: flex; gap: 46px; margin: 26px 0 0 119px; }
  .suite svg { width: 50px; height: 44px; }
  .suite text { font: 700 19px "Open Sans", sans-serif; fill: #fff; }
  .steps { margin-top: 52px; }
  .downloads { display: grid; grid-template-columns: 1fr 1fr; gap: 35px; margin-top: 12px; }
  .downloads .card { height: 260px; display: flex; justify-content: center; gap: 6px; padding-top: 25px; }
  .downloads svg + svg { margin-top: 6px; }
  .help { position: absolute; right: 10px; bottom: 10px; width: 139px; height: 50px; display: flex; align-items: center; justify-content: center; gap: 9px; border-radius: 8px; background: #86d3da; box-shadow: 0 2px 4px rgba(0, 0, 0, .3); color: #fff; font: 700 13px/16px "Inter", sans-serif; white-space: nowrap; }

  .scroll { width: 17px; flex: none; display: flex; flex-direction: column; background: #f1f1f1; }
  .track { flex: 1; padding: 0 2px; }
  .thumb { height: 78%; background: #c1c1c1; }

  .taskbar { flex: none; height: 40px; display: flex; background: #201e1d; color: #fff; }
  .start { width: 48px; display: grid; place-items: center; }
  .find { box-sizing: border-box; width: 344px; display: flex; align-items: center; padding: 0 4px 0 11px; background: #f2f2f2; border: 1px solid #bdbdbd; }
  .find input { flex: 1; margin-left: 10px; font-size: 14px; color: #222; }
  .find input::placeholder { color: #333; opacity: 1; }
  .apps { display: flex; gap: 1px; margin-left: 3px; }
  .apps button { width: 48px; display: grid; place-items: center; }
  .apps button.open { background: linear-gradient(#fdb47a, #fdb47a) center bottom / 40px 2px no-repeat; }
  .apps button.active { background: linear-gradient(#fdb47a, #fdb47a) center bottom / 48px 2px no-repeat #514f4d; }
  .app-icon { width: 24px; height: 24px; }
  .tray { margin-left: auto; display: flex; align-items: center; padding-right: 4px; }
  .weather { display: flex; align-items: center; gap: 8px; font-size: 13px; line-height: 20px; white-space: nowrap; }
  .status { display: flex; align-items: center; gap: 10px; margin: 0 4px 0 16px; }
  .clock { width: 64px; line-height: 18px; text-align: center; white-space: nowrap; }
  .notes { height: 40px; display: grid; place-items: center; margin-left: 15px; padding-right: 10px; border-right: 1px solid #777; }
</style>
